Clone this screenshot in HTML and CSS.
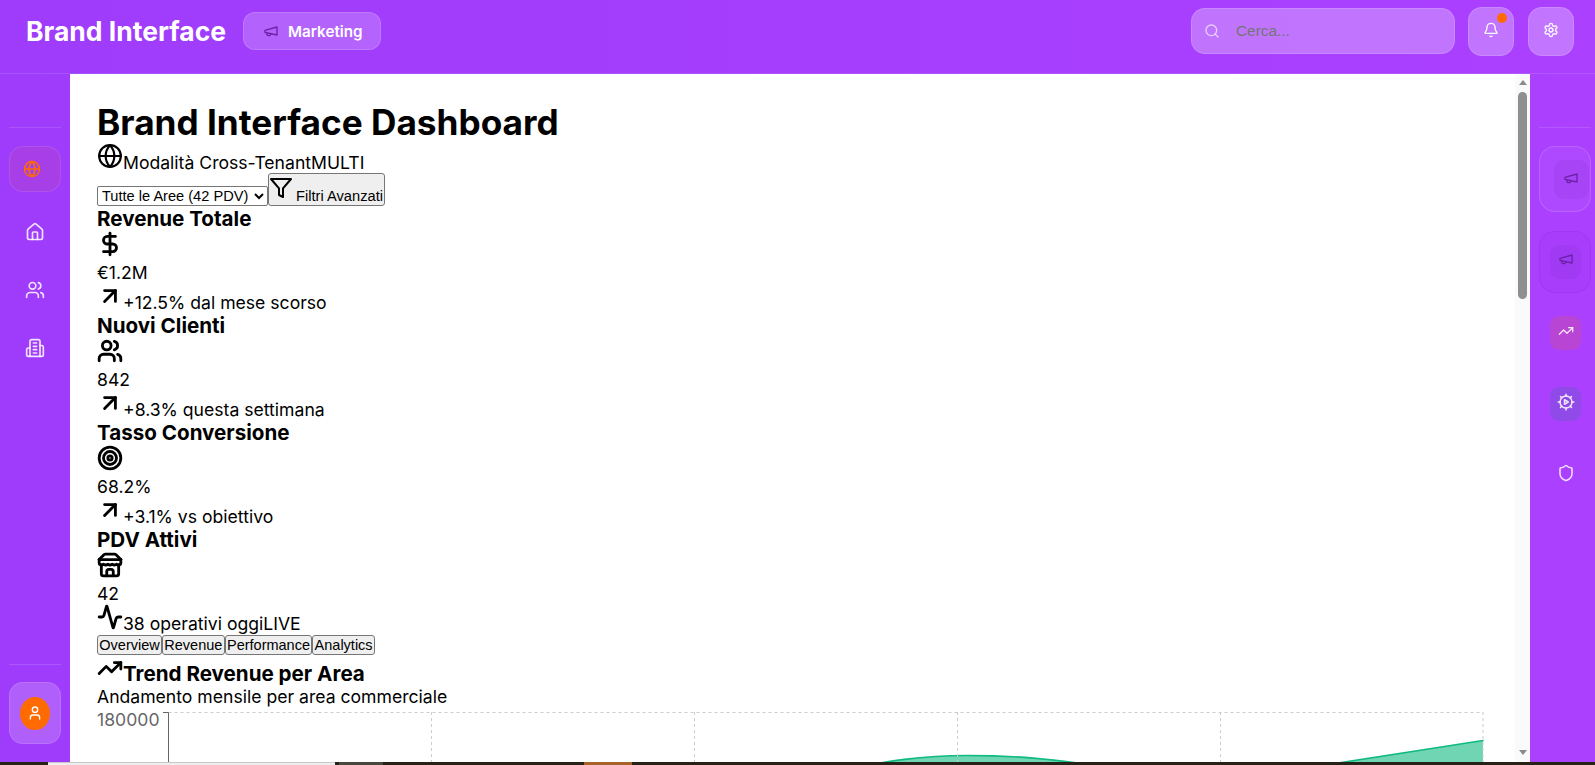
FILE: index.html
```html
<!DOCTYPE html>
<html lang="it">
<head>
<meta charset="utf-8">
<title>Brand Interface</title>
<link rel="stylesheet" href="styles.css">
</head>
<body>
<div class="app">
  <header class="topbar">
    <div class="brand">Brand Interface</div>
    <div class="pill">
      <svg class="ic16 dark" viewBox="0 0 24 24"><path d="m3 11 18-5v12L3 14v-3z"/><path d="M11.6 16.8a3 3 0 1 1-5.8-1.6"/></svg>
      <span>Marketing</span>
    </div>
    <div class="spacer"></div>
    <div class="search">
      <svg class="ic16 pale" viewBox="0 0 24 24"><circle cx="11" cy="11" r="8"/><path d="m21 21-4.3-4.3"/></svg>
      <input class="search-input" placeholder="Cerca...">
    </div>
    <div class="round-btn">
      <svg class="ic16 white" viewBox="0 0 24 24"><path d="M10.3 21a1.9 1.9 0 0 0 3.4 0"/><path d="M3.3 15.3A1 1 0 0 0 4 17h16a1 1 0 0 0 .7-1.7C19.4 14 18 12.500 18 8A6 6 0 0 0 6 8c0 4.500-1.400 6-2.700 7.300"/></svg>
      <span class="dot"></span>
    </div>
    <div class="round-btn">
      <svg class="ic16 white" viewBox="0 0 24 24"><path d="M12.200 2h-.4a2 2 0 0 0-2 2v.2a2 2 0 0 1-1 1.700l-.4.300a2 2 0 0 1-2 0l-.2-.1a2 2 0 0 0-2.700.7l-.2.400a2 2 0 0 0 .7 2.700l.2.100a2 2 0 0 1 1 1.700v.5a2 2 0 0 1-1 1.800l-.2.100a2 2 0 0 0-.7 2.700l.2.400a2 2 0 0 0 2.700.7l.2-.1a2 2 0 0 1 2 0l.4.300a2 2 0 0 1 1 1.700v.2a2 2 0 0 0 2 2h.4a2 2 0 0 0 2-2v-.2a2 2 0 0 1 1-1.700l.4-.3a2 2 0 0 1 2 0l.2.100a2 2 0 0 0 2.700-.7l.2-.4a2 2 0 0 0-.7-2.700l-.2-.1a2 2 0 0 1-1-1.800v-.5a2 2 0 0 1 1-1.700l.2-.1a2 2 0 0 0 .7-2.700l-.2-.4a2 2 0 0 0-2.700-.7l-.2.100a2 2 0 0 1-2 0l-.4-.3a2 2 0 0 1-1-1.700V4a2 2 0 0 0-2-2z"/><circle cx="12" cy="12" r="3"/></svg>
    </div>
  </header>

  <div class="body-row">
    <aside class="side">
      <div class="side-top"></div>
      <div class="side-items">
        <div class="tile active">
          <svg class="ic18 orange" viewBox="0 0 24 24"><circle cx="12" cy="12" r="10"/><path d="M12 2a14.500 14.500 0 0 0 0 20 14.500 14.500 0 0 0 0-20"/><path d="M2 12h20"/></svg>
        </div>
        <div class="tile">
          <svg class="ic20 soft" viewBox="0 0 24 24"><path d="M15 21v-8a1 1 0 0 0-1-1h-4a1 1 0 0 0-1 1v8"/><path d="M3 10a2 2 0 0 1 .7-1.500l7-6a2 2 0 0 1 2.600 0l7 6a2 2 0 0 1 .7 1.500v9a2 2 0 0 1-2 2H5a2 2 0 0 1-2-2z"/></svg>
        </div>
        <div class="tile">
          <svg class="ic20 soft" viewBox="0 0 24 24"><path d="M16 21v-2a4 4 0 0 0-4-4H6a4 4 0 0 0-4 4v2"/><circle cx="9" cy="7" r="4"/><path d="M22 21v-2a4 4 0 0 0-3-3.870"/><path d="M16 3.130a4 4 0 0 1 0 7.750"/></svg>
        </div>
        <div class="tile">
          <svg class="ic20 soft" viewBox="0 0 24 24"><path d="M6 22V4a2 2 0 0 1 2-2h8a2 2 0 0 1 2 2v18z"/><path d="M6 12H4a2 2 0 0 0-2 2v6a2 2 0 0 0 2 2h2"/><path d="M18 9h2a2 2 0 0 1 2 2v9a2 2 0 0 1-2 2h-2"/><path d="M10 6h4"/><path d="M10 10h4"/><path d="M10 14h4"/><path d="M10 18h4"/></svg>
        </div>
      </div>
      <div class="side-foot">
        <div class="user-tile">
          <span class="avatar">
            <svg class="ic16 white" viewBox="0 0 24 24"><path d="M19 21v-2a4 4 0 0 0-4-4H9a4 4 0 0 0-4 4v2"/><circle cx="12" cy="7" r="4"/></svg>
          </span>
        </div>
      </div>
    </aside>

    <main class="main">
      <div class="scroll-content">
        <h1 class="title">Brand Interface Dashboard</h1>
        <div><svg class="ic26" viewBox="0 0 24 24"><circle cx="12" cy="12" r="10"/><path d="M12 2a14.500 14.500 0 0 0 0 20 14.500 14.500 0 0 0 0-20"/><path d="M2 12h20"/></svg><span>Modalità Cross-Tenant</span><span>MULTI</span></div>
        <div><select class="area-select"><option>Tutte le Aree (42 PDV)</option></select><button class="filter-btn"><svg class="ic24" viewBox="0 0 24 24"><polygon points="22 3 2 3 10 12.460 10 19 14 21 14 12.460 22 3"/></svg> Filtri Avanzati</button></div>

        <section>
          <h3 class="kpi-title">Revenue Totale</h3>
          <div class="icon-row"><svg class="ic26 thick" viewBox="0 0 24 24"><line x1="12" x2="12" y1="2" y2="22"/><path d="M17 5H9.500a3.500 3.500 0 0 0 0 7h5a3.500 3.500 0 0 1 0 7H6"/></svg></div>
          <div class="value">€1.2M</div>
          <div class="delta"><svg class="ic26 thick" viewBox="0 0 24 24"><path d="M7 7h10v10"/><path d="M7 17 17 7"/></svg><span>+12.5% dal mese scorso</span></div>
        </section>

        <section>
          <h3 class="kpi-title">Nuovi Clienti</h3>
          <div class="icon-row"><svg class="ic26 thick" viewBox="0 0 24 24"><path d="M16 21v-2a4 4 0 0 0-4-4H6a4 4 0 0 0-4 4v2"/><circle cx="9" cy="7" r="4"/><path d="M22 21v-2a4 4 0 0 0-3-3.870"/><path d="M16 3.130a4 4 0 0 1 0 7.750"/></svg></div>
          <div class="value">842</div>
          <div class="delta"><svg class="ic26 thick" viewBox="0 0 24 24"><path d="M7 7h10v10"/><path d="M7 17 17 7"/></svg><span>+8.3% questa settimana</span></div>
        </section>

        <section>
          <h3 class="kpi-title">Tasso Conversione</h3>
          <div class="icon-row"><svg class="ic26 thick" viewBox="0 0 24 24"><circle cx="12" cy="12" r="10"/><circle cx="12" cy="12" r="6"/><circle cx="12" cy="12" r="2"/></svg></div>
          <div class="value">68.2%</div>
          <div class="delta"><svg class="ic26 thick" viewBox="0 0 24 24"><path d="M7 7h10v10"/><path d="M7 17 17 7"/></svg><span>+3.1% vs obiettivo</span></div>
        </section>

        <section>
          <h3 class="kpi-title">PDV Attivi</h3>
          <div class="icon-row"><svg class="ic26 thick" viewBox="0 0 24 24"><path d="m2 7 4.410-4.410A2 2 0 0 1 7.830 2h8.340a2 2 0 0 1 1.420.590L22 7"/><path d="M4 12v8a2 2 0 0 0 2 2h12a2 2 0 0 0 2-2v-8"/><path d="M15 22v-4a2 2 0 0 0-2-2h-2a2 2 0 0 0-2 2v4"/><path d="M2 7h20"/><path d="M22 7v3a2 2 0 0 1-2 2a2.700 2.700 0 0 1-1.590-.630.700.700 0 0 0-.820 0A2.700 2.700 0 0 1 16 12a2.700 2.700 0 0 1-1.590-.630.700.700 0 0 0-.820 0A2.700 2.700 0 0 1 12 12a2.700 2.700 0 0 1-1.590-.630.700.700 0 0 0-.820 0A2.700 2.700 0 0 1 8 12a2.700 2.700 0 0 1-1.590-.630.700.700 0 0 0-.820 0A2.700 2.700 0 0 1 4 12a2 2 0 0 1-2-2V7"/></svg></div>
          <div class="value">42</div>
          <div class="delta"><svg class="ic26 thick" viewBox="0 0 24 24"><path d="M22 12h-2.480a2 2 0 0 0-1.930 1.460l-2.350 8.360a.250.250 0 0 1-.480 0L9.240 2.180a.250.250 0 0 0-.480 0l-2.350 8.360A2 2 0 0 1 4.490 12H2"/></svg><span>38 operativi oggi</span><span>LIVE</span></div>
        </section>

        <div class="tabs"><button class="tab">Overview</button><button class="tab">Revenue</button><button class="tab">Performance</button><button class="tab">Analytics</button></div>

        <h3 class="kpi-title"><svg class="ic26 thick" viewBox="0 0 24 24"><path d="M16 7h6v6"/><path d="m22 7-8.500 8.500-5-5L2 17"/></svg><span>Trend Revenue per Area</span></h3>
        <div>Andamento mensile per area commerciale</div>

        <svg class="chart" width="1392" height="400" viewBox="0 0 1392 400">
          <path class="area" d="M700 75 C790 50 840 48.500 870 48.500 C910 48.500 950 50 1040 65 L1040 110 L700 110Z"/>
          <path class="area-line" d="M700 75 C790 50 840 48.500 870 48.500 C910 48.500 950 50 1040 65"/>
          <path class="area" d="M1186 64.600 L1386 33.500 L1386 110 L1186 110Z"/>
          <path class="area-line" d="M1186 64.600 L1386 33.500"/>
          <g class="grid">
            <path d="M71.500 5.500H1386"/>
            <path d="M334.500 5V400M597.500 5V400M860.500 5V400M1123.500 5V400M1386 5V400"/>
          </g>
          <path class="axis" d="M66 5.500H71.500V400"/>
          <text class="tick" x="62.500" y="18.500" text-anchor="end">180000</text>
        </svg>
      </div>
      <div class="scrollbar">
        <span class="arrow up"></span>
        <span class="thumb"></span>
        <span class="arrow down"></span>
      </div>
    </main>

    <aside class="side right">
      <div class="side-top"></div>
      <div class="side-items r">
        <div class="tile big"><span class="inner wide">
          <svg class="ic16 dark" viewBox="0 0 24 24"><path d="m3 11 18-5v12L3 14v-3z"/><path d="M11.6 16.8a3 3 0 1 1-5.8-1.6"/></svg>
        </span></div>
        <div class="tile big dim"><span class="inner">
          <svg class="ic16 dark" viewBox="0 0 24 24"><path d="m3 11 18-5v12L3 14v-3z"/><path d="M11.6 16.8a3 3 0 1 1-5.8-1.6"/></svg>
        </span></div>
        <div class="plain"><span class="inner pink">
          <svg class="ic16 soft" viewBox="0 0 24 24"><path d="M16 7h6v6"/><path d="m22 7-8.500 8.500-5-5L2 17"/></svg>
        </span></div>
        <div class="plain"><span class="inner indigo">
          <svg class="ic18 soft" viewBox="0 0 24 24"><circle cx="12" cy="12" r="8"/><path d="M10 9v6l5-3z"/><path d="M12 1.500v2.500M12 20v2.500M1.500 12H4M20 12h2.500M4.600 4.600l1.800 1.800M17.600 17.600l1.800 1.800M4.600 19.400l1.800-1.800M17.600 6.400l1.800-1.800"/></svg>
        </span></div>
        <div class="plain"><span class="inner">
          <svg class="ic18 soft" viewBox="0 0 24 24"><path d="M20 13c0 5-3.500 7.500-7.660 8.950a1 1 0 0 1-.670-.010C7.500 20.500 4 18 4 13V6a1 1 0 0 1 1-1c2 0 4.500-1.200 6.240-2.720a1.170 1.170 0 0 1 1.520 0C14.510 3.810 17 5 19 5a1 1 0 0 1 1 1z"/></svg>
        </span></div>
      </div>
    </aside>
  </div>

  <div class="taskbar">
    <span class="tb light"></span><span class="tb gap"></span><span class="tb grey"></span><span class="tb mid"></span><span class="tb amber"></span>
  </div>
</div>
</body>
</html>
```
FILE: styles.css
```css
* { box-sizing: border-box; }
html, body { margin: 0; height: 100%; overflow: hidden; }
body { font-family: Inter, "Liberation Sans", sans-serif; color: #000; background: #ab40ff; font-size: 17.6px; }
svg { fill: none; stroke: currentColor; stroke-width: 2; stroke-linecap: round; stroke-linejoin: round; flex: none; }
.app { width: 1595px; height: 765px; display: flex; flex-direction: column; background: linear-gradient(90deg, #9f3cfb 0%, #ab40ff 100%); }

.topbar { height: 74px; flex: none; display: flex; align-items: flex-start; padding: 0 21px 0 26px; border-bottom: 1px solid rgba(255,255,255,.12); }
.brand { font-size: 26.500px; font-weight: 700; color: #fff; line-height: 32px; margin-top: 15px; }
.pill { margin: 12px 0 0 17px; width: 138px; height: 38px; border-radius: 12px; display: flex; align-items: center; gap: 9px; padding-left: 19px; background: rgba(255,255,255,.2); border: 1px solid rgba(255,255,255,.14); color: #fff; font-size: 15.200px; font-weight: 600; }
.spacer { flex: 1; }
.search { margin-top: 8px; width: 264px; height: 46px; border-radius: 14px; background: rgba(255,255,255,.28); border: 1px solid rgba(255,255,255,.14); display: flex; align-items: center; padding-left: 12px; gap: 16px; }
.search-input { border: 0; outline: 0; background: transparent; font: 15.400px "Liberation Sans", Arial, sans-serif; width: 200px; padding: 0; }
.search-input::placeholder { color: #757575; opacity: 1; }
.round-btn { position: relative; margin: 7px 0 0 13px; width: 46px; height: 49px; border-radius: 14px; background: rgba(255,255,255,.28); border: 1px solid rgba(255,255,255,.14); display: flex; align-items: center; justify-content: center; }
.round-btn + .round-btn { margin-left: 14px; }
.round-btn svg { margin-top: -3px; }
.dot { position: absolute; top: 5px; right: 6px; width: 10px; height: 10px; border-radius: 50%; background: #ff6b00; }

.ic16 { width: 16px; height: 16px; }
.ic18 { width: 18px; height: 18px; }
.ic20 { width: 20px; height: 20px; }
.ic24 { width: 24px; height: 24px; }
.ic26 { width: 26px; height: 26px; }
.thick { stroke-width: 2.600; }
.white { color: #fff; }
.pale { color: rgba(255,255,255,.65); }
.soft { color: rgba(255,255,255,.85); }
.dark { color: #6b21a8; }
.orange { color: #ff6b00; }

.body-row { flex: 1; min-height: 0; display: flex; }
.side { width: 70px; flex: none; display: flex; flex-direction: column; padding: 0 9px; }
.side.right { width: 65px; padding: 0 4px 0 9px; }
.side-top { height: 54px; flex: none; border-bottom: 1px solid rgba(255,255,255,.12); }
.side-items { flex: 1; display: flex; flex-direction: column; padding-top: 18px; }
.tile { width: 52px; height: 46px; flex: none; display: flex; align-items: center; justify-content: center; margin-bottom: 12px; }
.tile.active { border-radius: 14px; background: rgba(190,70,170,.25); border: 1px solid rgba(255,255,255,.1); margin-bottom: 17px; padding-right: 6px; }
.side-foot { border-top: 1px solid rgba(255,255,255,.14); height: 98px; flex: none; padding-top: 17px; }
.user-tile { width: 52px; height: 62px; border-radius: 14px; background: rgba(255,255,255,.18); border: 1px solid rgba(255,255,255,.12); display: flex; align-items: center; justify-content: center; }
.avatar { width: 30px; height: 33px; border-radius: 50%; background: #ff6b00; display: flex; align-items: center; justify-content: center; }

.tile.big { height: 66px; border-radius: 16px; background: rgba(255,255,255,.05); border: 1px solid rgba(255,255,255,.14); justify-content: flex-start; padding-left: 14px; margin-bottom: 19px; }
.tile.big.dim { height: 62px; background: rgba(120,40,190,.05); border-color: rgba(120,40,190,.2); padding-left: 10px; margin-bottom: 23px; }
.inner { width: 31px; height: 34px; border-radius: 9px; display: flex; align-items: center; justify-content: center; }
.inner svg { margin-top: -5px; }
.inner.wide { width: 35px; height: 39px; border-radius: 10px; padding-right: 2px; }
.inner.wide svg { margin-top: -3px; }
.dim .inner svg { margin-top: -7px; }
.tile.big .inner { background: rgba(120,40,190,.14); }
.plain { width: 52px; padding-left: 11px; height: 34px; flex: none; margin-bottom: 37px; }
.inner.pink { background: #b845d3; }
.inner.indigo { background: #8f4ae8; }

.main { flex: 1; min-width: 0; background: #fff; display: flex; overflow: hidden; }
.scroll-content { flex: 1; min-width: 0; overflow: hidden; padding: 27px 0 0 27px; }
.title { font-size: 35.200px; font-weight: 700; margin: 0; }
.area-select { height: 20px; width: 171px; font: 14.600px "Liberation Sans", Arial, sans-serif; background: #fff; border: 1px solid #767676; border-radius: 2px; padding: 0; color: #000; }
.filter-btn { width: 117px; font: 14.670px "Liberation Sans", Arial, sans-serif; background: #efefef; border: 1px solid #767676; border-radius: 3px; padding: 2px 0 1px; color: #000; white-space: nowrap; text-align: left; }
.filter-btn svg { vertical-align: 1px; margin-right: -1px; }
.kpi-title { font-size: 20.600px; font-weight: 700; margin: 0; }
.icon-row { height: 31px; }
.value { height: 21px; line-height: 22px; }
.delta { height: 30px; }
.tabs { height: 22px; margin-top: -1px; }
.tab { font: 14.500px "Liberation Sans", Arial, sans-serif; height: 19.500px; line-height: 16px; background: #efefef; border: 1px solid #767676; border-radius: 3px; padding: 0 1.300px; color: #000; }
.chart { display: block; }
.grid path { stroke: #ccc; stroke-width: 1; stroke-dasharray: 3 3; stroke-linecap: butt; fill: none; }
.area { fill: #10b981; fill-opacity: .6; stroke: none; }
.area-line { stroke: #10b981; stroke-width: 1.600; }
.axis { stroke: #666; stroke-width: 1; stroke-linecap: butt; }
.tick { fill: #666; stroke: none; font-size: 17.600px; }

.scrollbar { width: 15px; flex: none; background: #fafafa; display: flex; flex-direction: column; align-items: center; padding: 6px 0 7px; }
.thumb { width: 9px; height: 207px; border-radius: 5px; background: #8f8f8f; margin-top: 7px; }
.arrow { width: 0; height: 0; border-left: 4.500px solid transparent; border-right: 4.500px solid transparent; }
.arrow.up { border-bottom: 5px solid #8a8a8a; }
.arrow.down { border-top: 5px solid #8a8a8a; margin-top: auto; }

.taskbar { height: 3px; flex: none; display: flex; background: #262218; }
.tb { display: block; height: 3px; }
.tb.light { margin-left: 48px; width: 287px; background: #eee; border-top: 1px solid #c8c8c8; }
.tb.gap { width: 4px; }
.tb.grey { width: 44px; background: #4a4640; }
.tb.mid { width: 201px; }
.tb.amber { width: 48px; background: #a8632a; }
```
